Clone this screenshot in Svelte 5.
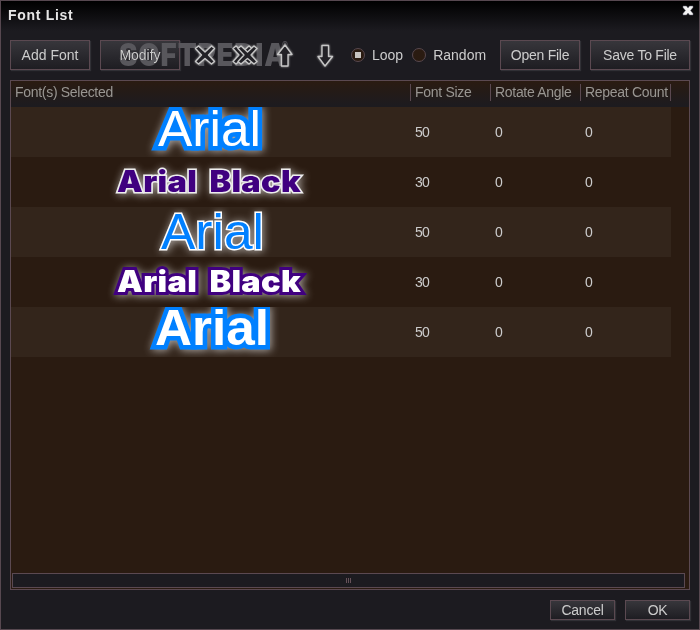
<script lang="ts">
    interface FontRow {
        name: string;
        kind: string;
        x: number;
        y: number;
        width: number;
        size: number;
        rotate: number;
        repeat: number;
    }

    const fonts: FontRow[] = [
        { name: "Arial", kind: "light-blue", x: 147, y: 39, width: 103, size: 50, rotate: 0, repeat: 0 },
        { name: "Arial Black", kind: "black purple", x: 106, y: 35, width: 184, size: 30, rotate: 0, repeat: 0 },
        { name: "Arial", kind: "blue", x: 150, y: 42, width: 103, size: 50, rotate: 0, repeat: 0 },
        { name: "Arial Black", kind: "black white", x: 106, y: 35, width: 184, size: 30, rotate: 0, repeat: 0 },
        { name: "Arial", kind: "light-blue bold", x: 144, y: 38, width: 114, size: 50, rotate: 0, repeat: 0 },
    ];

    const cross =
        "M18.500 11L25 17L31.500 11L34.500 13.500L28.500 20L34.500 26.500L31.500 29L25 23.500L18.500 29L15.500 26.500L21.500 20L15.500 13.500z";

    let mode = $state("loop");
</script>

<div class="window">
    <header>
        <h1>Font List</h1>
        <svg class="close" width="12" height="12" viewBox="0 0 12 12">
            <path d="M1 1h3.500L6 3l1.500-2H11v1.500L8.500 5.500 11 8.500V10H7.500L6 8l-1.500 2H1V8.500l2.500-3L1 2.500z" />
        </svg>
    </header>

    <div class="toolbar">
        <button class="add">Add Font</button>
        <button class="modify">Modify</button>
        <div class="icons">
            <svg width="160" height="40" viewBox="0 0 160 40">
                <g class="icon">
                    <path d={cross} />
                    <path d={cross} transform="translate(37.500)" />
                    <path d={cross} transform="translate(42.500)" />
                    <path d="M105 10l7 9.500h-4V31h-6.500V19.500h-4z" />
                    <path d="M145 31l-7-9.500h4V10.500h6.500v11h4z" />
                </g>
            </svg>
        </div>
        <label class="loop">
            <span class="radio" class:checked={mode === "loop"}></span>
            <input type="radio" value="loop" bind:group={mode} />Loop
        </label>
        <label>
            <span class="radio" class:checked={mode === "random"}></span>
            <input type="radio" value="random" bind:group={mode} />Random
        </label>
        <button class="open">Open File</button>
        <button class="save">Save To File</button>
        <svg class="watermark" width="180" height="34" viewBox="0 0 180 34">
            <text x="3" y="26" textLength="168" lengthAdjust="spacingAndGlyphs">SOFTPEDIA</text>
            <text class="registered" x="166" y="8">®</text>
        </svg>
    </div>

    <main>
        <div class="row head">
            <span>Font(s) Selected</span>
            <span>Font Size</span>
            <span>Rotate Angle</span>
            <span>Repeat Count</span>
        </div>
        {#each fonts as font}
            <div class="row item">
                <svg class="preview" width="400" height="50">
                    <text
                        class={font.kind}
                        x={font.x}
                        y={font.y}
                        textLength={font.width}
                        lengthAdjust="spacingAndGlyphs">{font.name}</text
                    >
                </svg>
                <span>{font.size}</span>
                <span>{font.rotate}</span>
                <span>{font.repeat}</span>
            </div>
        {/each}
        <div class="scrollbar"><i></i><i></i><i></i></div>
    </main>

    <footer>
        <button>Cancel</button>
        <button>OK</button>
    </footer>
</div>

<style>
    :global(body) {
        margin: 0;
        background: #1c1b20;
    }

    .window {
        box-sizing: border-box;
        width: 700px;
        height: 630px;
        border: 1px solid #574850;
        background: linear-gradient(#000, #1c1b20 30px);
        color: #ccc;
        font: 14px "Liberation Sans", Arial, sans-serif;
        overflow: hidden;
    }

    header {
        height: 39px;
        display: flex;
        justify-content: space-between;
    }

    h1 {
        margin: 5px 0 0 7px;
        font-size: 14px;
        line-height: 18px;
        letter-spacing: 0.7px;
        color: #e6e6e6;
    }

    .close {
        margin: 4px 5px 0 0;
        fill: #f4f4f4;
        stroke: #667;
        stroke-width: 0.5;
    }

    .toolbar {
        position: relative;
        display: flex;
        align-items: center;
        height: 30px;
        padding: 0 9px;
    }

    button {
        box-sizing: border-box;
        height: 30px;
        padding: 0;
        border: 1px solid #5b4951;
        border-radius: 0;
        background: linear-gradient(#37363b, #1e1d22);
        box-shadow: 1px 1px 1px #303035;
        color: #ccc;
        font: inherit;
        letter-spacing: -0.25px;
    }

    .add,
    .modify,
    .open {
        width: 80px;
    }

    .add,
    .modify {
        letter-spacing: 0;
    }

    .modify,
    .save {
        margin-left: 10px;
    }

    .save {
        width: 100px;
    }

    .open {
        margin-left: auto;
    }

    .icons {
        height: 40px;
        width: 160px;
        position: relative;
        z-index: 2;
    }

    .icon {
        fill: #222126;
        stroke: #c6c6c6;
        stroke-width: 1.4;
        stroke-linejoin: round;
        filter: drop-shadow(0 0 1px #aaa);
    }

    label {
        display: flex;
        align-items: center;
    }

    .loop {
        margin: 0 9px 0 11px;
    }

    input {
        display: none;
    }

    .radio {
        box-sizing: border-box;
        width: 14px;
        height: 14px;
        margin-right: 7px;
        border: 1px solid #58484e;
        border-radius: 50%;
        background: #2a1b11;
        display: grid;
        place-items: center;
    }

    .checked::after {
        content: "";
        width: 6px;
        height: 6px;
        background: #c8c4c1;
    }

    .watermark {
        position: absolute;
        left: 115px;
        top: 0;
        pointer-events: none;
        fill: #58575c;
        font: 900 31px Inter, sans-serif;
        letter-spacing: 1px;
        mix-blend-mode: lighten;
    }

    .registered {
        font-size: 9px;
    }

    main {
        box-sizing: border-box;
        width: 680px;
        height: 510px;
        margin: 10px 9px 0;
        border: 1px solid #5b4951;
        background: #2a1b11;
        display: flex;
        flex-direction: column;
    }

    .row {
        display: grid;
        grid-template-columns: 400px 80px 90px 90px;
        width: 660px;
        align-items: center;
    }

    .head {
        box-sizing: border-box;
        width: 100%;
        height: 26px;
        padding-bottom: 3px;
        background: linear-gradient(#2a1b11, #1d1b1f 24px);
        color: #999692;
        letter-spacing: -0.3px;
    }

    .head span {
        box-sizing: border-box;
        height: 17px;
        padding-left: 4px;
        border-right: 1px solid #5b4951;
        line-height: 17px;
        white-space: nowrap;
    }

    .item {
        height: 50px;
    }

    .item:nth-child(even) {
        background: #33251b;
    }

    .item span {
        padding-left: 4px;
        letter-spacing: -0.8px;
    }

    .preview {
        display: block;
        overflow: hidden;
    }

    .preview text {
        font: 50px "Liberation Sans", Arial, sans-serif;
        paint-order: stroke;
        stroke-linejoin: miter;
        filter: drop-shadow(1px 1px 4px rgba(255, 255, 255, 0.6));
    }

    .preview .light-blue {
        fill: #fff;
        stroke: #0080ff;
        stroke-width: 9px;
    }

    .preview .bold {
        font-weight: bold;
    }

    .preview .blue {
        fill: #0080ff;
        stroke: #fff;
        stroke-width: 3px;
    }

    .preview .black {
        font: 900 29.5px Inter, sans-serif;
        letter-spacing: 0.3px;
        word-spacing: 5px;
    }

    .preview .purple {
        fill: #400080;
        stroke: #eee;
        stroke-width: 3px;
    }

    .preview .white {
        fill: #fff;
        stroke: #400080;
        stroke-width: 6px;
    }

    .scrollbar {
        box-sizing: border-box;
        width: 673px;
        height: 15px;
        margin: auto 0 1px 1px;
        border: 1px solid #5b4951;
        background: #1c1b20;
        display: flex;
        justify-content: center;
        align-items: center;
        gap: 1px;
    }

    .scrollbar i {
        width: 1px;
        height: 5px;
        background: #665159;
    }

    footer {
        display: flex;
        justify-content: flex-end;
        gap: 10px;
        padding: 10px 9px;
    }

    footer button {
        width: 65px;
        height: 20px;
        line-height: 18px;
    }
</style>
